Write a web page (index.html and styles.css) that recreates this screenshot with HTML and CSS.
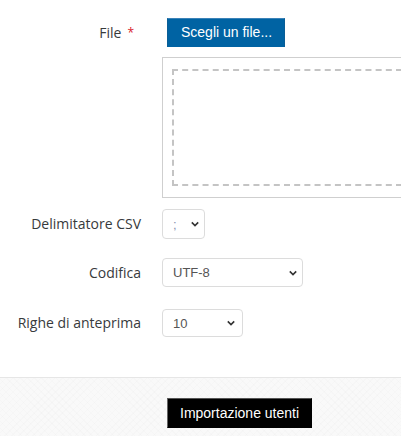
FILE: index.html
```html
<html>
  <head>
    <title>Carica utenti</title>
    <link rel="stylesheet" href="styles.css">
  </head>
  <body>
    <form class="upload-form">
      <div class="form-row file-row">
        <label class="form-label">File<span class="req" title="Obbligatorio">*</span></label>
        <div class="form-control">
          <button type="button" class="btn btn-primary">Scegli un file...</button>
          <div class="dropzone">
            <div class="dropzone-inner"></div>
          </div>
        </div>
      </div>
      <div class="form-row delim-row">
        <label class="form-label" for="delimiter">Delimitatore CSV</label>
        <div class="select-wrap sel-small">
          <select id="delimiter"><option>;</option></select>
          <svg class="chevron" viewBox="0 0 10 6"><path d="M1 1l4 4 4-4" /></svg>
        </div>
      </div>
      <div class="form-row enc-row">
        <label class="form-label" for="encoding">Codifica</label>
        <div class="select-wrap sel-wide">
          <select id="encoding"><option>UTF-8</option></select>
          <svg class="chevron" viewBox="0 0 10 6"><path d="M1 1l4 4 4-4" /></svg>
        </div>
      </div>
      <div class="form-row preview-row">
        <label class="form-label" for="previewrows">Righe di anteprima</label>
        <div class="select-wrap sel-mid">
          <select id="previewrows"><option>10</option></select>
          <svg class="chevron" viewBox="0 0 10 6"><path d="M1 1l4 4 4-4" /></svg>
        </div>
      </div>
      <footer class="form-footer">
        <button type="button" class="btn btn-dark">Importazione utenti</button>
      </footer>
    </form>
  </body>
</html>
```
FILE: styles.css
```css
body {
  margin: 0;
  background: #fff;
  font-family: "Open Sans", "Liberation Sans", sans-serif;
  color: #373a3c;
  overflow: hidden;
}
.upload-form { padding-top: 18px; }
.form-row {
  display: grid;
  grid-template-columns: 141px 1fr;
  column-gap: 21px;
  align-items: center;
}
.form-label {
  text-align: right;
  font-size: 14px;
  line-height: 18px;
}
.file-row { align-items: start; margin-bottom: 11px; }
.file-row .form-label { padding-top: 6px; padding-right: 7px; }
.req {
  color: #d9202b;
  font-size: 12px;
  margin-left: 6px;
  vertical-align: 1px;
}
.btn {
  font-family: "Liberation Sans", Arial, sans-serif;
  font-size: 14px;
  line-height: 17px;
  padding: 5px 12px 5px 13px;
  border: 1px solid transparent;
  border-radius: 0;
  color: #fff;
}
.btn-primary {
  margin-left: 5px;
  background: #0063a3;
  border-color: #3a82b8 #0a5e96 #0063a3 #0a5e96;
}
.btn-dark {
  background: #000;
  border-color: #555 #000 #000 #666;
  padding: 6px 12px 5px;
}
.dropzone {
  margin-top: 10px;
  width: 240px;
  height: 141px;
  border: 1px solid #cfcfcf;
  border-right: 0;
  padding: 11px 0 11px 9px;
  box-sizing: border-box;
}
.dropzone-inner {
  height: 100%;
  border: 2px dashed #c4c4c4;
  border-right: 0;
  box-sizing: border-box;
}
.select-wrap {
  position: relative;
  height: 30px;
}
.select-wrap select {
  appearance: none;
  -webkit-appearance: none;
  height: 100%;
  width: 100%;
  border: 1px solid #dcdcdc;
  border-radius: 4px;
  background: #fff;
  padding: 0 0 0 10px;
  font-family: "Liberation Sans", Arial, sans-serif;
  font-size: 13px;
  color: #555;
}
.chevron {
  position: absolute;
  top: 50%;
  right: 6px;
  width: 8px;
  height: 6px;
  margin-top: -3px;
  fill: none;
  stroke: #333;
  stroke-width: 2;
  pointer-events: none;
}
.sel-small { width: 43px; }
.sel-small select { color: #8a8fb0; }
.sel-wide { width: 141px; height: 29px; }
.sel-mid { width: 81px; height: 28px; }
.sel-mid .chevron { right: 8px; }
.delim-row { margin-bottom: 19px; }
.enc-row { margin-bottom: 22px; }
.form-footer {
  margin-top: 40px;
  border-top: 1px solid #e6e6e6;
  padding: 20px 0 8px 167px;
  background-color: #f9f9f9;
  background-image:
    repeating-linear-gradient(45deg, rgba(0,0,0,0.012) 0 1px, transparent 1px 5px),
    repeating-linear-gradient(-45deg, rgba(0,0,0,0.012) 0 1px, transparent 1px 5px);
}
```
